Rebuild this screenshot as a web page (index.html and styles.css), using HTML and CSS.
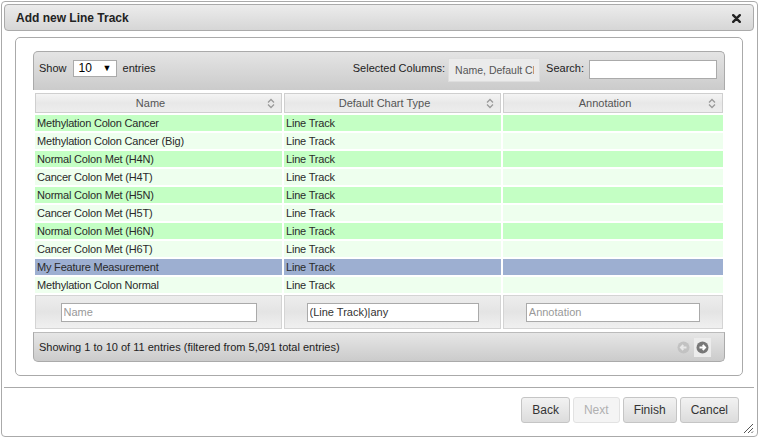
FILE: index.html
```html
<!DOCTYPE html>
<html lang="en">
<head>
<meta charset="utf-8">
<title>Add new Line Track</title>
<link rel="stylesheet" href="styles.css">
</head>
<body>
<div class="dialog">
  <div class="titlebar">
    <span class="title">Add new Line Track</span>
    <span class="close"><svg width="9" height="9" viewBox="0 0 9 9"><path d="M1.2 1.2L7.8 7.8M7.8 1.2L1.2 7.8" stroke="#222" stroke-width="2.4" stroke-linecap="round"/></svg></span>
  </div>
  <div class="dialog-body">
    <div class="panel">
      <div class="toolbar">
        <div class="length">
          <span>Show</span>
          <span class="fake-select"><span>10</span><span class="arrow">▼</span></span>
          <span>entries</span>
        </div>
        <div class="tools-right">
          <span>Selected Columns:</span>
          <input class="colbox" type="text" readonly value="Name, Default Chart Type, Annotation">
          <span>Search:</span>
          <input class="search" type="text">
        </div>
      </div>
      <table class="grid">
        <colgroup><col class="c1"><col class="c2"><col class="c3"></colgroup>
        <thead>
          <tr>
            <th><span>Name</span><svg class="sort" width="8" height="11" viewBox="0 0 8 11"><path d="M1 4.5L4 1.5L7 4.5M1 6.5L4 9.5L7 6.5" fill="none" stroke="#9a9a9a" stroke-width="1.3"/></svg></th>
            <th><span>Default Chart Type</span><svg class="sort" width="8" height="11" viewBox="0 0 8 11"><path d="M1 4.5L4 1.5L7 4.5M1 6.5L4 9.5L7 6.5" fill="none" stroke="#9a9a9a" stroke-width="1.3"/></svg></th>
            <th><span>Annotation</span><svg class="sort" width="8" height="11" viewBox="0 0 8 11"><path d="M1 4.5L4 1.5L7 4.5M1 6.5L4 9.5L7 6.5" fill="none" stroke="#9a9a9a" stroke-width="1.3"/></svg></th>
          </tr>
        </thead>
        <tbody>
          <tr class="odd"><td>Methylation Colon Cancer</td><td>Line Track</td><td></td></tr>
          <tr class="even"><td>Methylation Colon Cancer (Big)</td><td>Line Track</td><td></td></tr>
          <tr class="odd"><td>Normal Colon Met (H4N)</td><td>Line Track</td><td></td></tr>
          <tr class="even"><td>Cancer Colon Met (H4T)</td><td>Line Track</td><td></td></tr>
          <tr class="odd"><td>Normal Colon Met (H5N)</td><td>Line Track</td><td></td></tr>
          <tr class="even"><td>Cancer Colon Met (H5T)</td><td>Line Track</td><td></td></tr>
          <tr class="odd"><td>Normal Colon Met (H6N)</td><td>Line Track</td><td></td></tr>
          <tr class="even"><td>Cancer Colon Met (H6T)</td><td>Line Track</td><td></td></tr>
          <tr class="selected"><td>My Feature Measurement</td><td>Line Track</td><td></td></tr>
          <tr class="even"><td>Methylation Colon Normal</td><td>Line Track</td><td></td></tr>
        </tbody>
        <tfoot>
          <tr>
            <th><input class="filter" type="text" placeholder="Name"></th>
            <th><input class="filter" type="text" value="(Line Track)|any"></th>
            <th><input class="filter" type="text" placeholder="Annotation"></th>
          </tr>
        </tfoot>
      </table>
      <div class="footer">
        <span>Showing 1 to 10 of 11 entries (filtered from 5,091 total entries)</span>
        <div class="pager">
          <span class="pg prev"><svg width="13" height="13" viewBox="0 0 13 13"><circle cx="6.5" cy="6.5" r="6" fill="#c2c2c2"/><path d="M9.5 6.5H4M6.3 4L3.8 6.5L6.3 9" fill="none" stroke="#e8e8e8" stroke-width="1.8"/></svg></span>
          <span class="pg next"><svg width="13" height="13" viewBox="0 0 13 13"><circle cx="6.5" cy="6.5" r="6" fill="#777"/><path d="M3.5 6.5H9M6.7 4L9.2 6.5L6.7 9" fill="none" stroke="#fff" stroke-width="1.8"/></svg></span>
        </div>
      </div>
    </div>
  </div>
  <div class="buttonpane">
    <button class="btn" type="button">Back</button>
    <button class="btn disabled" type="button">Next</button>
    <button class="btn" type="button">Finish</button>
    <button class="btn" type="button">Cancel</button>
    <svg class="grip" width="12" height="12" viewBox="0 0 12 12"><path d="M11 2L2 11M11 6L6 11M11 9.5L9.5 11" stroke="#555" stroke-width="1"/></svg>
  </div>
</div>
</body>
</html>
```
FILE: styles.css
```css
* { box-sizing: border-box; }
html, body { margin: 0; padding: 0; background: #fff; }
body {
  font-family: "Liberation Sans", Arial, sans-serif;
  font-size: 11px;
  color: #333;
}
.dialog {
  margin: 1px 0 0 1px;
  width: 757px;
  height: 436px;
  border: 1px solid #aaa;
  border-radius: 4px;
  padding: 2px 3px 2px 2px;
  display: flex;
  flex-direction: column;
  background: #fff;
  position: relative;
}
.titlebar {
  height: 27px;
  border: 1px solid #aaa;
  border-radius: 4px;
  background: linear-gradient(#ececec, #d6d6d6);
  display: flex;
  align-items: center;
  justify-content: space-between;
  padding: 0 12px 0 11px;
}
.title {
  font-weight: bold;
  font-size: 12px;
  color: #222;
}
.close { display: flex; margin-top: 1px; }
.dialog-body {
  padding: 6px 11px 11px 11px;
}
.panel {
  height: 339px;
  border: 1px solid #aaa;
  border-radius: 5px;
  padding: 13px 17px 13px 17px;
}
.toolbar {
  height: 39px;
  border: 1px solid #aaa;
  border-bottom: none;
  border-radius: 5px 5px 0 0;
  background: linear-gradient(#e4e4e4, #cbcbcb);
  display: flex;
  justify-content: space-between;
  padding: 5px 7px 0 5px;
  color: #222;
}
.length, .tools-right {
  display: flex;
  align-items: flex-start;
  gap: 0;
}
.length > span, .tools-right > span { line-height: 23px; }
.fake-select {
  display: flex;
  justify-content: space-between;
  align-items: center;
  width: 44px;
  height: 17px;
  margin: 3px 6px 0 6px;
  border: 1px solid #aaa;
  background: #fff;
  padding: 0 4px 0 5px;
  line-height: 15px !important;
  font-size: 12px;
  color: #000;
}
.fake-select .arrow { font-size: 9px; }
.colbox {
  width: 92px;
  height: 24px;
  margin: 1px 6px 0 3px;
  background: #ebebeb;
  border: 1px solid #dedede;
  padding: 0 5px 0 6px;
  color: #555;
  font-family: "Liberation Sans", Arial, sans-serif;
  font-size: 10.5px;
  outline: none;
}
.search {
  width: 128px;
  height: 19px;
  margin: 3px 0 0 5px;
  border: 1px solid #aaa;
  background: #fff;
  padding: 0 3px;
  font: inherit;
}
.grid {
  width: 692px;
  margin-top: 1px;
  border-collapse: separate;
  border-spacing: 2px;
  table-layout: fixed;
  letter-spacing: -0.2px;
}
.grid col.c1 { width: 247px; }
.grid col.c2 { width: 217px; }
.grid col.c3 { width: 220px; }
.grid thead th {
  position: relative;
  height: 20px;
  border: 1px solid #cfcfcf;
  background: linear-gradient(#f4f4f4, #e8e8e8 50%, #ededed);
  font-weight: normal;
  color: #555;
  padding: 0 18px 0 2px;
  text-align: center;
  line-height: 17px;
  letter-spacing: 0;
}
.sort {
  position: absolute;
  right: 6px;
  top: 4px;
}
.grid td {
  height: 16px;
  padding: 0 2px;
  line-height: 16px;
  white-space: nowrap;
  color: #2a2a2a;
}
.grid tr.odd td { background: #c4ffc4; }
.grid tr.even td { background: #eeffee; }
.grid tr.selected td { background: #9dafd1; }
.grid tfoot th {
  height: 34px;
  border: 1px solid #d4d4d4;
  background: linear-gradient(#ededed, #e4e4e4 50%, #f0f0f0);
  padding: 0;
  text-align: center;
  font-weight: normal;
}
.filter {
  width: 80%;
  height: 19px;
  border: 1px solid #aaa;
  background: #fff;
  padding: 0 2px;
  font: inherit;
  font-size: 11px;
  color: #333;
  vertical-align: middle;
}
.filter::placeholder { color: #999; }
.footer {
  margin-top: 1px;
  height: 30px;
  border: 1px solid #aaa;
  border-top-color: #bbb;
  border-radius: 0 0 5px 5px;
  background: linear-gradient(#e6e6e6, #cbcbcb);
  display: flex;
  align-items: center;
  justify-content: space-between;
  padding: 0 13px 0 5px;
  color: #222;
}
.pager { display: flex; align-items: center; gap: 2px; }
.pg { display: flex; align-items: center; justify-content: center; width: 17px; height: 19px; }
.pg.next { background: #ececec; }
.buttonpane {
  flex: 1;
  border-top: 1px solid #aaa;
  display: flex;
  justify-content: flex-end;
  align-items: flex-start;
  gap: 3px;
  padding: 9px 15px 0 0;
  position: relative;
}
.btn {
  height: 26px;
  padding: 0 10px;
  border: 1px solid #c5c5c5;
  border-radius: 3px;
  background: linear-gradient(#f2f2f2, #dcdcdc);
  font-family: "Liberation Sans", Arial, sans-serif;
  font-size: 12px;
  color: #333;
}
.btn.disabled {
  color: #b0b0b0;
  background: #f4f4f4;
  border-color: #e2e2e2;
}
.grip {
  position: absolute;
  right: 0;
  bottom: 0;
}
```
